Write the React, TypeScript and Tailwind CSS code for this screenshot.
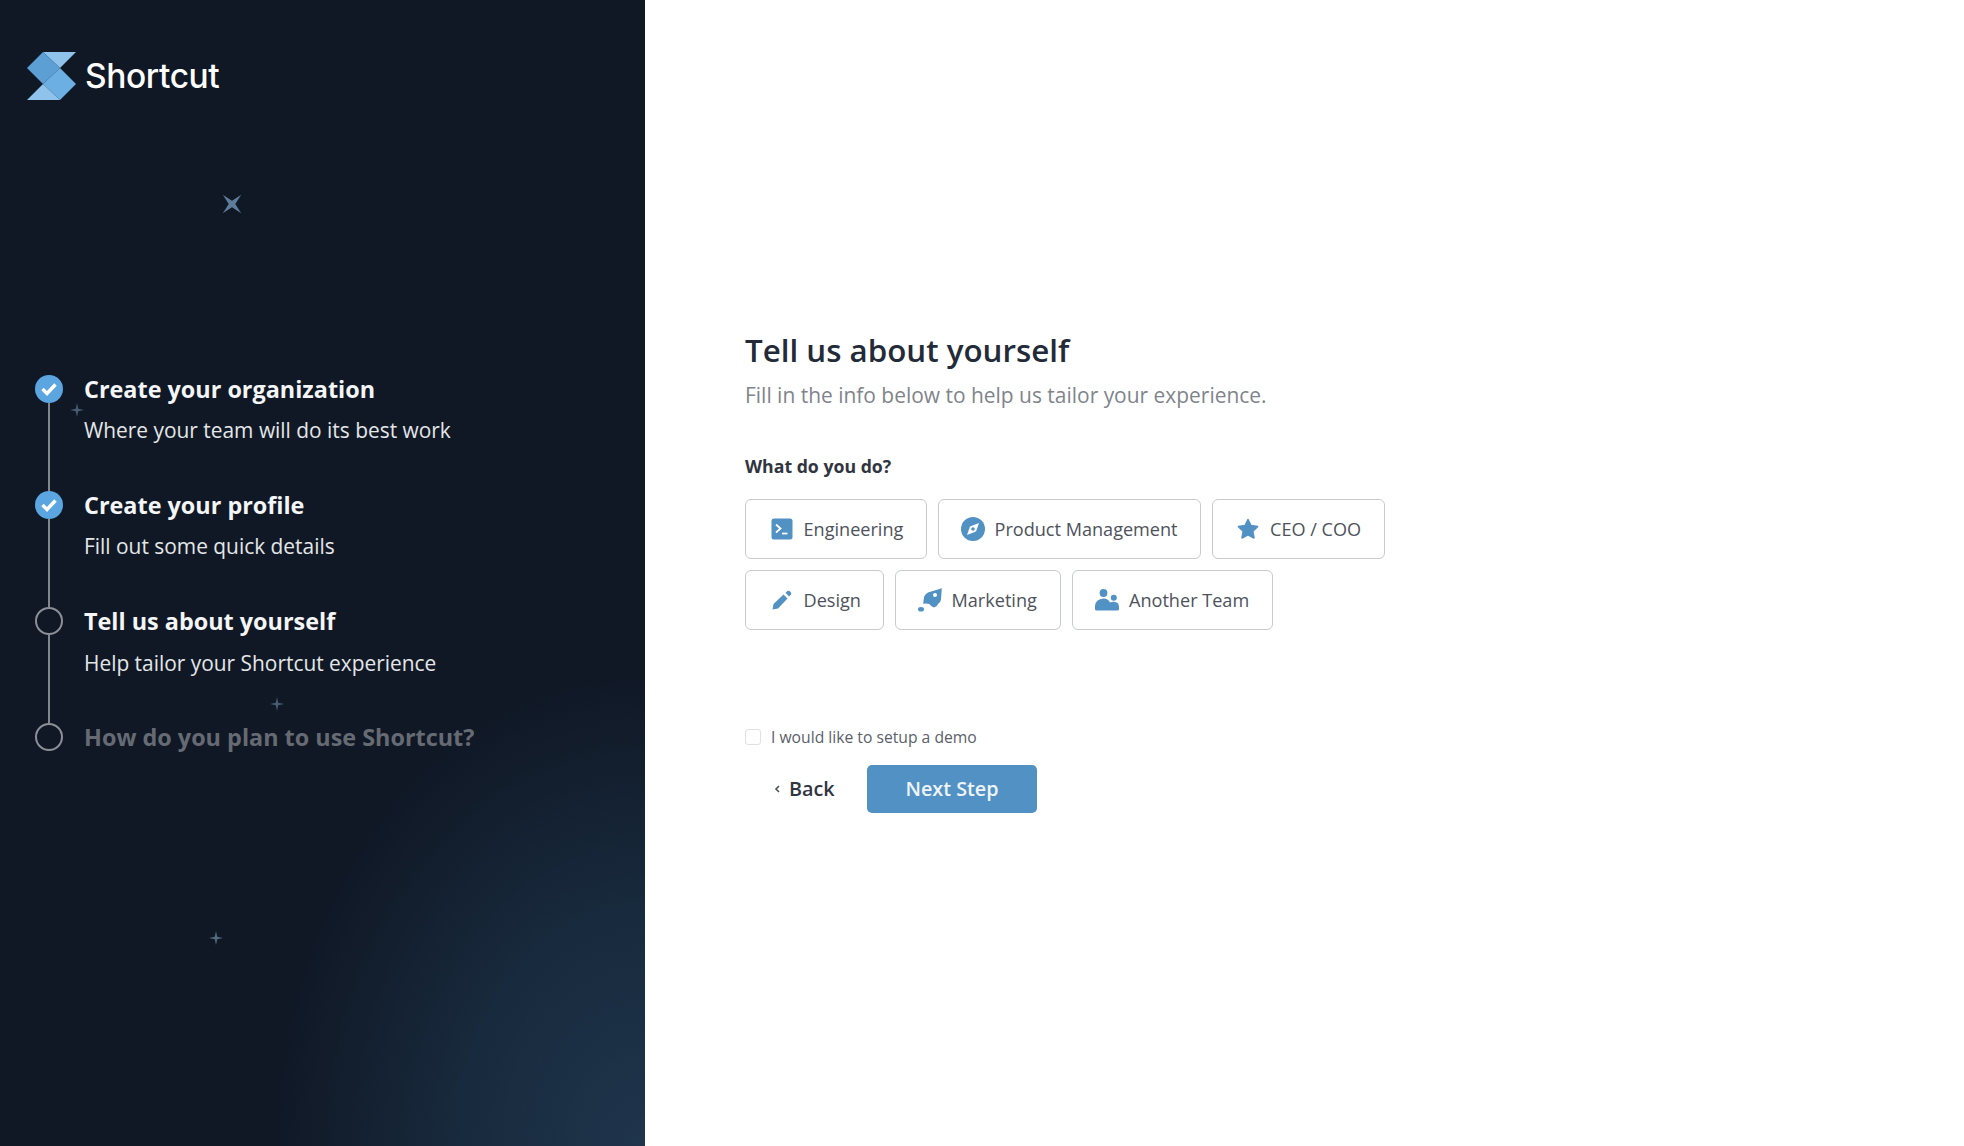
import React from "react";

const Sparkle = ({ className, rotate = false }: { className: string; rotate?: boolean }) => (
  <svg viewBox="0 0 20 20" className={className} style={rotate ? { transform: "rotate(45deg)" } : undefined}>
    <path d="M10 0 L11.8 8.2 L20 10 L11.8 11.8 L10 20 L8.2 11.8 L0 10 L8.2 8.2 Z" fill="currentColor" />
  </svg>
);

const Logo = () => (
  <svg width="50" height="50" viewBox="27 50 50 50" className="shrink-0">
    <polygon points="43,51 76,51 60,67" fill="#8fc3ec" />
    <polygon points="43,51 60,67 43,83 27,67" fill="#5b9fd5" />
    <polygon points="60,67 76,83 60,99 43,83" fill="#6cafe2" />
    <polygon points="43,83 60,99 27,99" fill="#8fc3ec" />
  </svg>
);

const Terminal = () => (
  <svg width="22" height="22" viewBox="0 0 22 22">
    <rect x="0.5" y="0.5" width="21" height="21" rx="2.5" fill="#5191c4" />
    <path d="M5 6.5 L9.5 10.5 L5 14.5" fill="none" stroke="#fff" strokeWidth="1.8" />
    <path d="M11 15.5 H16.5" fill="none" stroke="#fff" strokeWidth="1.8" />
  </svg>
);
const Compass = () => (
  <svg width="24" height="24" viewBox="0 0 24 24">
    <circle cx="12" cy="12" r="12" fill="#5191c4" />
    <path d="M18 6 L15 14.5 L6 18 L9 9.5 Z" fill="#fff" />
    <circle cx="12" cy="12" r="1.8" fill="#5191c4" />
  </svg>
);
const Star = () => (
  <svg width="22" height="22" viewBox="0 0 22 22">
    <path d="M11 1.5 L14 7.6 L20.6 8.6 L15.8 13.2 L17 20 L11 16.8 L5 20 L6.2 13.2 L1.4 8.6 L8 7.6 Z" fill="#5191c4" stroke="#5191c4" strokeWidth="1.5" strokeLinejoin="round" />
  </svg>
);
const Pencil = () => (
  <svg width="20" height="20" viewBox="0 0 20 20">
    <path d="M0.5 19.5 L1.5 14 L11.5 4.5 L15.5 8.5 L6 18.5 Z" fill="#5191c4" />
    <path d="M13.5 2.8 L15.4 1 Q16.5 0.2 17.8 1.2 L18.8 2.2 Q19.8 3.4 18.9 4.6 L17.1 6.6 Z" fill="#5191c4" />
  </svg>
);
const Rocket = () => (
  <svg width="24" height="24" viewBox="0 0 24 24">
    <path d="M23.8 0.3 L23 11.5 Q22.5 14.8 20 16 Q19 19 16 19.6 Q13 19 11.5 16 Q8 15 5.2 15.8 L6 9 Q7 6 10 4.5 Z" fill="#5191c4" />
    <circle cx="17" cy="7" r="2" fill="#fff" />
    <ellipse cx="3" cy="21.3" rx="3" ry="2.3" fill="#5191c4" />
  </svg>
);
const People = () => (
  <svg width="24" height="22" viewBox="0 0 24 22">
    <circle cx="8.5" cy="4" r="3.9" fill="#5191c4" />
    <circle cx="18.8" cy="8.8" r="3" fill="#5191c4" />
    <path d="M1.5 21.5 Q0 21.5 0 20 V17 Q0.5 10 8.5 9.5 Q13 9.8 15 13.4 Q17 12.6 19 12.7 Q23.5 13 24 17.5 V20 Q24 21.5 22.5 21.5 Z" fill="#5191c4" />
  </svg>
);

const Check = () => (
  <svg width="28" height="28" viewBox="0 0 28 28" className="shrink-0">
    <circle cx="14" cy="14" r="14" fill="#5ba6e0" />
    <path d="M7.5 14 L12 18.5 L20.5 9.5" fill="none" stroke="#fff" strokeWidth="3.4" />
  </svg>
);

const steps = [
  { title: "Create your organization", sub: "Where your team will do its best work", state: "done" },
  { title: "Create your profile", sub: "Fill out some quick details", state: "done" },
  { title: "Tell us about yourself", sub: "Help tailor your Shortcut experience", state: "open" },
  { title: "How do you plan to use Shortcut?", sub: "", state: "future" },
];

const roles: { label: string; icon: React.ReactNode; size: string }[][] = [
  [
    { label: "Engineering", icon: <Terminal />, size: "w-[181.5px] pl-[23.5px]" },
    { label: "Product Management", icon: <Compass />, size: "w-[263px] pl-[22px]" },
    { label: "CEO / COO", icon: <Star />, size: "w-[173px] pl-[23.5px]" },
  ],
  [
    { label: "Design", icon: <Pencil />, size: "w-[138.5px] pl-[23.5px]" },
    { label: "Marketing", icon: <Rocket />, size: "w-[166.5px] pl-[22px]" },
    { label: "Another Team", icon: <People />, size: "w-[201px] pl-[22px]" },
  ],
];

export default function App() {
  return (
    <div className="flex h-[1146px] w-[1964px] overflow-hidden bg-white font-['Open_Sans',sans-serif]">
      <aside className="relative flex w-[645px] shrink-0 flex-col bg-[#101826] bg-[radial-gradient(ellipse_370px_470px_at_100%_100%,#1f354c_0%,#182a3d_50%,#101826_100%)]">
        <div className="flex items-center gap-[8px] pl-[27px] pt-[51px]">
          <Logo />
          <span className="font-['Inter',sans-serif] text-[33.5px] font-medium leading-[50px] tracking-[-0.4px] text-white">Shortcut</span>
        </div>
        <Sparkle rotate className="absolute left-[219px] top-[191px] h-[26px] w-[26px] text-[#5c7c99]" />
        <Sparkle className="absolute left-[70px] top-[403px] h-[14px] w-[14px] text-[#465c70]" />
        <Sparkle className="absolute left-[270px] top-[697px] h-[14px] w-[14px] text-[#465c70]" />
        <Sparkle className="absolute left-[209px] top-[931px] h-[14px] w-[14px] text-[#526a7e]" />
        <ol className="mt-[273.5px] flex flex-col pl-[34.5px]">
          {steps.map((s, i) => (
            <li key={s.title} className="flex h-[116.3px] gap-[21.5px]">
              <div className="flex w-[28px] shrink-0 flex-col items-center">
                {s.state === "done" ? (
                  <Check />
                ) : (
                  <span className="h-[28px] w-[28px] shrink-0 rounded-full border-[2px] border-[#8b9096]" />
                )}
                {i < steps.length - 1 && <span className="w-[2px] flex-1 bg-[#80868e]" />}
              </div>
              <div className="flex flex-col">
                <span className={`text-[23.4px] font-bold leading-[28px] ${s.state === "future" ? "text-[#666b73]" : "text-[#f4f5f6]"}`}>
                  {s.title}
                </span>
                {s.sub && <span className="mt-[13.5px] text-[20.9px] leading-[28px] text-[#e4e6e8]">{s.sub}</span>}
              </div>
            </li>
          ))}
        </ol>
      </aside>
      <main className="flex flex-1 flex-col justify-center pb-[5px] pl-[100px]">
        <h1 className="text-[31.3px] font-semibold leading-[44px] text-[#232a38]">Tell us about yourself</h1>
        <p className="mt-[7px] text-[20.95px] leading-[32px] text-[#7f848c]">Fill in the info below to help us tailor your experience.</p>
        <h2 className="mt-[42px] text-[17.7px] font-bold leading-[26px] text-[#30353f]">What do you do?</h2>
        <div className="mt-[20px] flex flex-col gap-[11px]">
          {roles.map((row, r) => (
            <div key={r} className="flex gap-[11px]">
              {row.map((b) => (
                <button
                  key={b.label}
                  className={`flex h-[60px] items-center rounded-[6px] border-[1.5px] border-[#c8cacc] bg-white ${b.size}`}
                >
                  <span className="flex w-[24px] justify-center">{b.icon}</span>
                  <span className="ml-[10px] text-[18.1px] leading-[26px] text-[#4d525b]">{b.label}</span>
                </button>
              ))}
            </div>
          ))}
        </div>
        <label className="mt-[96px] flex items-center gap-[10px]">
          <span className="h-[16px] w-[16px] rounded-[3px] border border-[#dfe1e6] bg-white" />
          <span className="text-[15.7px] leading-[22px] text-[#5b6069]">I would like to setup a demo</span>
        </label>
        <div className="mt-[17px] flex items-center">
          <button className="flex h-[48px] w-[122px] items-center pl-[29px] text-[19.8px] font-semibold text-[#30353f]">
            <svg width="7" height="10" viewBox="0 0 7 10" className="mr-[8px]">
              <path d="M5 2 L2 5 L5 8" fill="none" stroke="#4d525b" strokeWidth="1.6" />
            </svg>
            Back
          </button>
          <button className="h-[48px] w-[170px] rounded-[5px] bg-[#5191c4] text-[19.8px] font-semibold text-[#eef4f9]">Next Step</button>
        </div>
      </main>
    </div>
  );
}
